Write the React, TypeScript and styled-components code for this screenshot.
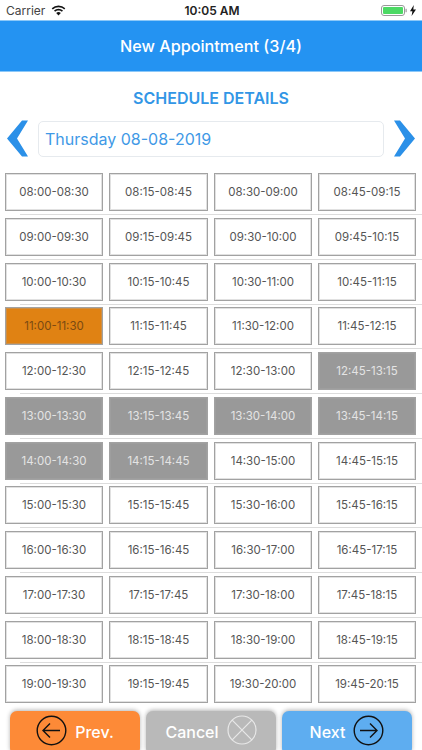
import styled, { createGlobalStyle } from "styled-components";

const GlobalStyle = createGlobalStyle`
  html, body {
    margin: 0;
    padding: 0;
    background: #fff;
    overflow: hidden;
  }
  * {
    box-sizing: border-box;
  }
`;

const Screen = styled.div`
  width: 422px;
  height: 750px;
  display: flex;
  flex-direction: column;
  font-family: Inter, "Liberation Sans", sans-serif;
  overflow: hidden;
`;

const StatusBar = styled.div`
  height: 20px;
  display: grid;
  grid-template-columns: 1fr auto 1fr;
  align-items: center;
  padding: 0 6px;
  color: #222;
  font-size: 12px;
`;

const Carrier = styled.div`
  display: flex;
  align-items: center;
  gap: 6px;
  color: #444;
`;

const Clock = styled.div`
  font-weight: 600;
  font-size: 12px;
  margin-left: 2px;
`;

const BatteryWrap = styled.div`
  display: flex;
  justify-content: flex-end;
  align-items: center;
  gap: 3px;
`;

const Header = styled.div`
  height: 52px;
  flex: none;
  display: flex;
  align-items: center;
  justify-content: center;
  background: #2493f2;
  border-top: 1px solid #8cc8f8;
  border-bottom: 1px solid #8cc8f8;
  color: #fff;
  font-size: 16.2px;
  font-weight: 500;
`;

const SectionTitle = styled.div`
  margin-top: 16px;
  height: 20px;
  line-height: 20px;
  text-align: center;
  color: #3296e6;
  font-size: 16px;
  font-weight: 600;
`;

const DateRow = styled.div`
  display: flex;
  align-items: center;
  margin-top: 12px;
  padding-left: 7px;
  height: 37px;
  gap: 10px;
`;

const DateField = styled.div`
  width: 346px;
  height: 36px;
  display: flex;
  align-items: center;
  padding-left: 6px;
  border: 1px solid #e6eaee;
  border-radius: 5px;
  color: #3f99e6;
  font-size: 16px;
`;

const Slots = styled.div`
  flex: 1;
  margin-top: 16px;
`;

const SlotRow = styled.div`
  display: grid;
  grid-template-columns: 98px 99px 98px 98px;
  column-gap: 6px;
  padding-left: 5px;
`;

const Slot = styled.div<{ $state: "free" | "selected" | "busy" }>`
  height: 38px;
  display: flex;
  align-items: center;
  justify-content: center;
  font-size: 11.5px;
  border: 1px solid #a2a2a2;
  box-shadow: inset 0 0 0 1px rgba(170, 170, 170, 0.35);
  background: ${(p) =>
    p.$state === "selected"
      ? "#e08213"
      : p.$state === "busy"
        ? "#999999"
        : "#fff"};
  color: ${(p) =>
    p.$state === "selected"
      ? "#7a4a12"
      : p.$state === "busy"
        ? "#e4e4e4"
        : "#555"};
`;

const Divider = styled.div`
  height: 1px;
  margin: 3px 0 2.75px 20px;
  background: #dcdcdc;
`;

const Footer = styled.div`
  flex: none;
  height: 39px;
  display: grid;
  grid-template-columns: repeat(3, 130px);
  column-gap: 6px;
  padding-left: 10px;
`;

const FooterButton = styled.div<{ $bg: string }>`
  height: 44px;
  display: flex;
  align-items: flex-start;
  justify-content: center;
  gap: 8px;
  padding-top: 4px;
  border-radius: 7px;
  background: ${(p) => p.$bg};
  box-shadow: 0 -1px 4px rgba(0, 0, 0, 0.3);
  color: #fff;
  font-size: 16px;
  font-weight: 500;
`;

const ButtonLabel = styled.span`
  line-height: 30px;
  padding-top: 2px;
`;

const busy = new Set([
  "12:45",
  "13:00",
  "13:15",
  "13:30",
  "13:45",
  "14:00",
  "14:15",
]);

function addMinutes(h: number, m: number, extra: number) {
  const total = h * 60 + m + extra;
  const hh = String(Math.floor(total / 60)).padStart(2, "0");
  const mm = String(total % 60).padStart(2, "0");
  return `${hh}:${mm}`;
}

const hours = [8, 9, 10, 11, 12, 13, 14, 15, 16, 17, 18, 19];
const quarters = [0, 15, 30, 45];

function CircleArrow({ dir, color }: { dir: "left" | "right"; color: string }) {
  return (
    <svg width="31" height="31" viewBox="0 0 31 31" fill="none" stroke={color} strokeWidth="1.4">
      <circle cx="15.5" cy="15.5" r="14.3" />
      {dir === "left" ? (
        <path d="M24 15.5H7M14 8.5l-7 7 7 7" />
      ) : (
        <path d="M7 15.5h17M17 8.5l7 7-7 7" />
      )}
    </svg>
  );
}

function CircleCross() {
  return (
    <svg width="30" height="30" viewBox="0 0 30 30" fill="none" stroke="#e8e8e8" strokeWidth="1.2">
      <circle cx="15" cy="15" r="14" />
      <path d="M5.2 5.2l19.6 19.6M24.8 5.2L5.2 24.8" />
    </svg>
  );
}

function Chevron({ dir }: { dir: "left" | "right" }) {
  return (
    <svg width="21" height="37" viewBox="0 0 21 37" fill="#2b90e8">
      {dir === "left" ? (
        <path d="M15 0.5h6L10 18.5l11 18h-6L0 18.5z" />
      ) : (
        <path d="M0 0.5h6l15 18-15 18H0l11-18z" />
      )}
    </svg>
  );
}

function App() {
  return (
    <Screen>
      <GlobalStyle />
      <StatusBar>
        <Carrier>
          Carrier
          <svg width="15" height="11" viewBox="0 0 15 11" fill="#111">
            <path d="M7.5 2.3c2.2 0 4.2.8 5.7 2.2l1.1-1.2A10 10 0 0 0 7.5.6 10 10 0 0 0 .7 3.3l1.1 1.2a8.3 8.3 0 0 1 5.7-2.2z" />
            <path d="M7.5 5.5c1.3 0 2.5.5 3.4 1.3L12 5.6a6.6 6.6 0 0 0-9 0l1.1 1.2c.9-.8 2.1-1.3 3.4-1.3z" />
            <path d="M7.5 10.6l2.3-2.5a3.3 3.3 0 0 0-4.6 0z" />
          </svg>
        </Carrier>
        <Clock>10:05 AM</Clock>
        <BatteryWrap>
          <svg width="26" height="11" viewBox="0 0 26 11">
            <rect x="0.5" y="0.5" width="23" height="10" rx="2.5" fill="none" stroke="#999" />
            <rect x="2" y="2" width="20" height="7" rx="1" fill="#4cd964" />
            <rect x="24.5" y="3.8" width="1.2" height="3.4" fill="#999" />
          </svg>
          <svg width="6" height="11" viewBox="0 0 6 11" fill="#111">
            <path d="M3.8 0L0 6.2h2.4L1.6 11 6 4.6H3.3z" />
          </svg>
        </BatteryWrap>
      </StatusBar>
      <Header>New Appointment (3/4)</Header>
      <SectionTitle>SCHEDULE DETAILS</SectionTitle>
      <DateRow>
        <Chevron dir="left" />
        <DateField>Thursday 08-08-2019</DateField>
        <Chevron dir="right" />
      </DateRow>
      <Slots>
        {hours.map((h, i) => (
          <div key={h}>
            <SlotRow>
              {quarters.map((m) => {
                const start = addMinutes(h, m, 0);
                const state =
                  start === "11:00" ? "selected" : busy.has(start) ? "busy" : "free";
                return (
                  <Slot key={m} $state={state}>
                    {start}-{addMinutes(h, m, 30)}
                  </Slot>
                );
              })}
            </SlotRow>
            {i < hours.length - 1 && <Divider />}
          </div>
        ))}
      </Slots>
      <Footer>
        <FooterButton $bg="#fd8a37">
          <CircleArrow dir="left" color="#111" />
          <ButtonLabel>Prev.</ButtonLabel>
        </FooterButton>
        <FooterButton $bg="#b9b9b9">
          <ButtonLabel>Cancel</ButtonLabel>
          <CircleCross />
        </FooterButton>
        <FooterButton $bg="#5eadf0">
          <ButtonLabel>Next</ButtonLabel>
          <CircleArrow dir="right" color="#111" />
        </FooterButton>
      </Footer>
    </Screen>
  );
}

export default App;
